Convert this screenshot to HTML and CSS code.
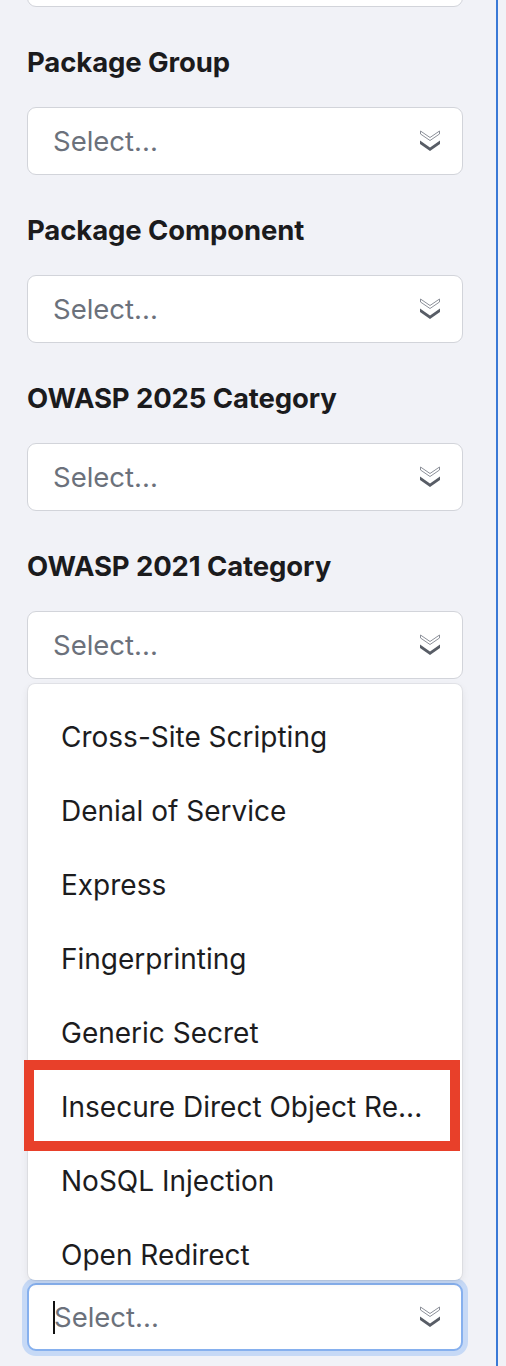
FILE: index.html
```html
<!DOCTYPE html>
<html>
<head>
<meta charset="utf-8">
<link rel="stylesheet" href="styles.css">
</head>
<body>
<div class="page">
  <div class="panel">
    <div class="field first">
      <div class="select"></div>
    </div>

    <div class="field">
      <div class="label">Package Group</div>
      <div class="select"><span class="placeholder">Select...</span>
        <svg class="chev" viewBox="0 0 22 22" width="22" height="22"><polygon points="1.5,1 11,7.5 20.5,1 20.5,4 11,10.5 1.5,4" fill="#fff" stroke="#8c9099" stroke-width="1"/><polygon points="1,10.5 11,17.5 21,10.5 21,14 11,21 1,14" fill="#585d66"/></svg>
      </div>
    </div>

    <div class="field">
      <div class="label">Package Component</div>
      <div class="select"><span class="placeholder">Select...</span>
        <svg class="chev" viewBox="0 0 22 22" width="22" height="22"><polygon points="1.5,1 11,7.5 20.5,1 20.5,4 11,10.5 1.5,4" fill="#fff" stroke="#8c9099" stroke-width="1"/><polygon points="1,10.5 11,17.5 21,10.5 21,14 11,21 1,14" fill="#585d66"/></svg>
      </div>
    </div>

    <div class="field">
      <div class="label">OWASP 2025 Category</div>
      <div class="select"><span class="placeholder">Select...</span>
        <svg class="chev" viewBox="0 0 22 22" width="22" height="22"><polygon points="1.5,1 11,7.5 20.5,1 20.5,4 11,10.5 1.5,4" fill="#fff" stroke="#8c9099" stroke-width="1"/><polygon points="1,10.5 11,17.5 21,10.5 21,14 11,21 1,14" fill="#585d66"/></svg>
      </div>
    </div>

    <div class="field">
      <div class="label">OWASP 2021 Category</div>
      <div class="dd">
        <div class="select"><span class="placeholder">Select...</span>
          <svg class="chev" viewBox="0 0 22 22" width="22" height="22"><polygon points="1.5,1 11,7.5 20.5,1 20.5,4 11,10.5 1.5,4" fill="#fff" stroke="#8c9099" stroke-width="1"/><polygon points="1,10.5 11,17.5 21,10.5 21,14 11,21 1,14" fill="#585d66"/></svg>
        </div>
        <div class="menu">
          <div class="item">Cross-Site Scripting</div>
          <div class="item">Denial of Service</div>
          <div class="item">Express</div>
          <div class="item">Fingerprinting</div>
          <div class="item">Generic Secret</div>
          <div class="item">Insecure Direct Object Re...</div>
          <div class="item">NoSQL Injection</div>
          <div class="item">Open Redirect</div>
        </div>
        <div class="highlight"></div>
      </div>
    </div>

    <div class="field covered">
      <div class="label">CWE</div>
      <div class="select"><span class="placeholder">Select...</span></div>
    </div>

    <div class="field covered">
      <div class="label">Severity</div>
      <div class="select"><span class="placeholder">Select...</span></div>
    </div>

    <div class="field covered">
      <div class="label">Status</div>
      <div class="select"><span class="placeholder">Select...</span></div>
    </div>

    <div class="field">
      <div class="label covered">Tags</div>
      <div class="select focused"><span class="caret"></span><span class="placeholder">Select...</span>
        <svg class="chev" viewBox="0 0 22 22" width="22" height="22"><polygon points="1.5,1 11,7.5 20.5,1 20.5,4 11,10.5 1.5,4" fill="#fff" stroke="#8c9099" stroke-width="1"/><polygon points="1,10.5 11,17.5 21,10.5 21,14 11,21 1,14" fill="#585d66"/></svg>
      </div>
    </div>
  </div>
  <div class="divider"></div>
</div>
</body>
</html>
```

FILE: styles.css
```css
* { box-sizing: border-box; }
html, body {
  margin: 0;
  padding: 0;
  background: #f1f2f7;
  overflow: hidden;
}
body {
  font-family: Inter, "Liberation Sans", sans-serif;
  height: 1366px;
}
.page {
  display: flex;
  height: 1366px;
  overflow: hidden;
}
.panel {
  width: 496px;
  padding-left: 27px;
  padding-right: 33px;
  display: flex;
  flex-direction: column;
}
.divider {
  width: 2px;
  background: #3a79d6;
  height: 1366px;
  flex-shrink: 0;
}
.field {
  display: flex;
  flex-direction: column;
}
.field.first {
  margin-top: -61px;
}
.covered {
  visibility: hidden;
}
.label {
  margin-top: 40px;
  margin-bottom: 30px;
  height: 30px;
  line-height: 30px;
  font-size: 27.5px;
  font-weight: 700;
  color: #1b1b1d;
  letter-spacing: -0.1px;
}
.select {
  position: relative;
  height: 68px;
  background: #fff;
  border: 1.5px solid #d2d4da;
  border-radius: 9px;
  display: flex;
  align-items: center;
  padding-left: 25px;
  padding-right: 21px;
}
.placeholder {
  flex: 1;
  font-size: 27.5px;
  color: #6b717b;
}
.chev {
  display: block;
  flex-shrink: 0;
}
.select.focused {
  border: 2px solid #86b0ee;
  box-shadow: 0 0 0 5px #c6d9f6;
  padding-left: 24px;
  padding-right: 20px;
}
.caret {
  width: 2px;
  height: 33px;
  background: #111;
  margin-right: -1px;
}
.dd {
  position: relative;
  z-index: 5;
}
.menu {
  position: absolute;
  top: 73px;
  left: 1px;
  width: 434px;
  height: 596px;
  overflow: hidden;
  background: #fff;
  border-radius: 7px;
  box-shadow: 0 0 0 1px rgba(0,0,0,0.05), 0 3px 8px rgba(0,0,0,0.08);
  padding-top: 16px;
}
.item {
  height: 74px;
  line-height: 74px;
  padding-left: 33px;
  padding-right: 20px;
  font-size: 28px;
  color: #1c1c1e;
  white-space: nowrap;
  overflow: hidden;
}
.highlight {
  position: absolute;
  top: 449px;
  left: -3px;
  width: 436px;
  height: 91px;
  border: 10px solid #e8402a;
}
```
